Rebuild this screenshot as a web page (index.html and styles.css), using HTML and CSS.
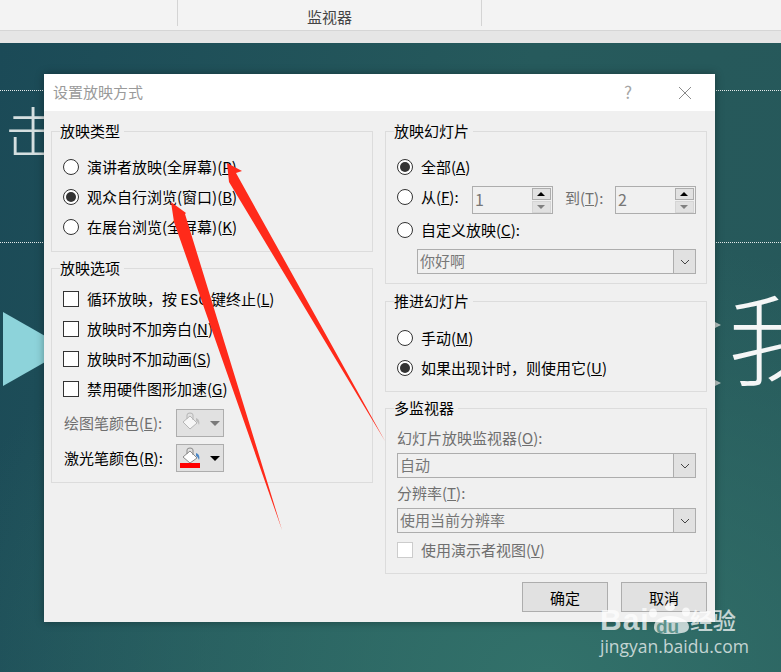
FILE: index.html
```html
<!DOCTYPE html>
<html lang="zh-CN">
<head>
<meta charset="utf-8">
<title>设置放映方式</title>
<link rel="stylesheet" href="styles.css">
</head>
<body>
<div class="page">
  <header class="ribbon">
    <div class="ribbon-cell first"></div>
    <div class="ribbon-cell middle">监视器</div>
    <div class="ribbon-cell"></div>
  </header>
  <div class="strip"></div>
  <main class="slide">
    <div class="dotted top"></div>
    <div class="dotted bottom"></div>
    <div class="big-glyph left">击</div>
    <div class="big-glyph right">我</div>
    <div class="stub one"></div>
    <div class="stub two"></div>
    <div class="play"></div>
    <section class="dialog">
      <div class="titlebar">
        <span class="title">设置放映方式</span>
        <span class="help">?</span>
        <svg class="close" width="14" height="14" viewBox="0 0 14 14"><path d="M1 1L13 13M13 1L1 13" stroke="#8a8a8a" fill="none"/></svg>
      </div>
      <div class="dialog-body">
        <div class="columns">
          <div class="column left-col">
            <fieldset class="group type-group">
              <legend>放映类型</legend>
              <div class="row"><span class="radio"></span>演讲者放映(全屏幕)(<u>P</u>)</div>
              <div class="row"><span class="radio on"></span>观众自行浏览(窗口)(<u>B</u>)</div>
              <div class="row"><span class="radio"></span>在展台浏览(全屏幕)(<u>K</u>)</div>
            </fieldset>
            <fieldset class="group options-group">
              <legend>放映选项</legend>
              <div class="row"><span class="check"></span>循环放映，按 ESC 键终止(<u>L</u>)</div>
              <div class="row"><span class="check"></span>放映时不加旁白(<u>N</u>)</div>
              <div class="row"><span class="check"></span>放映时不加动画(<u>S</u>)</div>
              <div class="row"><span class="check"></span>禁用硬件图形加速(<u>G</u>)</div>
              <div class="color-row muted">
                <span class="color-label">绘图笔颜色(<u>E</u>):</span>
                <span class="color-btn">
                  <svg width="24" height="22" viewBox="0 0 24 22"><path d="M10 4l7 7-7 6-7-7z" fill="#f6f6f6" stroke="#b5b5b5"/><path d="M7 7V3q0-2 3-2t3 2v5" fill="none" stroke="#b5b5b5"/><path d="M16 6c3 1 4 4 3 7-1-2-1-3-3-4z" fill="#bdbdbd"/></svg>
                  <span class="caret"></span>
                </span>
              </div>
              <div class="color-row">
                <span class="color-label">激光笔颜色(<u>R</u>):</span>
                <span class="color-btn">
                  <svg width="24" height="22" viewBox="0 0 24 22"><path d="M10 4l7 7-7 5-7-6z" fill="#fff" stroke="#8a8a8a"/><path d="M7 7V3q0-2 3-2t3 2v5" fill="none" stroke="#8a8a8a"/><path d="M16 6c3 1 4 4 3 7-1-2-1-3-3-4z" fill="#4a86c5"/><rect x="0" y="16" width="20" height="5" fill="#f00"/></svg>
                  <span class="caret"></span>
                </span>
              </div>
            </fieldset>
          </div>
          <div class="column">
            <fieldset class="group slides-group">
              <legend>放映幻灯片</legend>
              <div class="row"><span class="radio on"></span>全部(<u>A</u>)</div>
              <div class="row range-row">
                <span class="radio"></span><span class="from-label">从(<u>F</u>):</span>
                <span class="spin"><span class="spin-value">1</span><span class="spin-btns"><span class="spin-up"></span><span class="spin-down"></span></span></span>
                <span class="to-label muted">到(<u>T</u>):</span>
                <span class="spin"><span class="spin-value">2</span><span class="spin-btns"><span class="spin-up"></span><span class="spin-down"></span></span></span>
              </div>
              <div class="row custom-row"><span class="radio"></span>自定义放映(<u>C</u>):</div>
              <div class="select indent"><span class="select-value">你好啊</span><span class="select-btn"><svg width="10" height="6" viewBox="0 0 10 6"><path d="M1 1l4 4 4-4" fill="none" stroke="#444"/></svg></span></div>
            </fieldset>
            <fieldset class="group advance-group">
              <legend>推进幻灯片</legend>
              <div class="row"><span class="radio"></span>手动(<u>M</u>)</div>
              <div class="row"><span class="radio on"></span>如果出现计时，则使用它(<u>U</u>)</div>
            </fieldset>
            <fieldset class="group monitor-group">
              <legend>多监视器</legend>
              <div class="field-label muted">幻灯片放映监视器(<u>O</u>):</div>
              <div class="select"><span class="select-value">自动</span><span class="select-btn"><svg width="10" height="6" viewBox="0 0 10 6"><path d="M1 1l4 4 4-4" fill="none" stroke="#444"/></svg></span></div>
              <div class="field-label muted">分辨率(<u>T</u>):</div>
              <div class="select"><span class="select-value">使用当前分辨率</span><span class="select-btn"><svg width="10" height="6" viewBox="0 0 10 6"><path d="M1 1l4 4 4-4" fill="none" stroke="#444"/></svg></span></div>
              <div class="presenter muted"><span class="check disabled"></span>使用演示者视图(<u>V</u>)</div>
            </fieldset>
          </div>
        </div>
        <div class="actions">
          <button class="btn" type="button">确定</button>
          <button class="btn" type="button">取消</button>
        </div>
      </div>
    </section>
  </main>
  <svg class="arrows" width="781" height="672" viewBox="0 0 781 672">
    <polygon points="227,163 242,171 236,173 385,441 229,182" fill="#ff2a1a"/>
    <polygon points="171,202 186,213 185,214 282,530 174,222" fill="#ff2a1a"/>
  </svg>
  <div class="watermark">
    <div class="wm-top">
      <span class="wm-bai">Bai</span>
      <svg class="wm-paw" width="54" height="34" viewBox="0 0 54 34"><g fill="#fff" fill-opacity=".72"><ellipse cx="11" cy="10" rx="4" ry="4.5"/><ellipse cx="28" cy="4" rx="5" ry="4"/><ellipse cx="44" cy="9" rx="4" ry="4.5"/><path d="M12 24c0-7 7-11 16-11s19 4 19 11c0 5-6 7-19 7S12 29 12 24z"/></g></svg>
      <span class="wm-du">du</span>
      <span class="wm-jy">经验</span>
    </div>
    <div class="wm-url">jingyan.baidu.com</div>
  </div>
</div>
</body>
</html>
```
FILE: styles.css
```css
* { box-sizing: border-box; }
html, body { margin: 0; padding: 0; }
body { font-family: "Noto Sans CJK SC", "Liberation Sans", sans-serif; font-size: 15px; color: #000; }
.page { position: relative; width: 781px; height: 672px; overflow: hidden; display: flex; flex-direction: column; }

.ribbon { height: 31px; flex: none; display: flex; background: #f3f3f3; border-bottom: 1px solid #d6d6d6; }
.ribbon-cell { flex: 1; height: 26px; }
.ribbon-cell.first { flex: 0 0 178px; border-right: 1px solid #d4d4d4; }
.ribbon-cell.middle { flex: 0 0 304px; border-right: 1px solid #d4d4d4; text-align: center; line-height: 34px; color: #444; }
.strip { height: 12px; flex: none; background: #e6e6e6; }

.slide { position: relative; flex: 1; overflow: hidden; background: radial-gradient(ellipse 640px 440px at 70% 100%, #32716a 0%, rgba(50,113,106,0) 100%), linear-gradient(100deg, #1b4a57 0%, #265a5c 60%, #26585a 100%); }
.dotted { position: absolute; left: 0; right: 0; border-top: 1px dotted #e4eaea; }
.dotted.top { top: 47px; }
.dotted.bottom { top: 199px; }
.big-glyph { position: absolute; color: #f4f6f6; font-weight: 300; line-height: 1; }
.big-glyph.left { font-size: 56px; left: 5px; top: 59px; color: #d5dfe0; }
.big-glyph.right { font-size: 100px; left: 728px; top: 242px; }
.stub { position: absolute; left: 715px; width: 0; height: 0; border-top: 3px solid transparent; border-bottom: 3px solid transparent; border-left: 6px solid #b9c6c4; }
.stub.one { top: 279px; }
.stub.two { top: 337px; }
.play { position: absolute; left: 3px; top: 269px; width: 0; height: 0; border-top: 37px solid transparent; border-bottom: 37px solid transparent; border-left: 65px solid #8dd3da; }

.dialog { position: absolute; left: 44px; top: 31px; width: 671px; height: 548px; background: #f0f0f0; box-shadow: 0 0 8px rgba(0,0,0,.35); display: flex; flex-direction: column; }
.titlebar { height: 37px; flex: none; background: #fff; display: flex; align-items: center; padding-left: 9px; padding-right: 23px; }
.title { flex: 1; color: #9a9a9a; padding-bottom: 2px; }
.help { color: #a5a5a5; width: 54px; font-size: 17px; padding-bottom: 2px; }
.dialog-body { flex: 1; padding: 10px 8px 0 7px; }
.columns { display: grid; grid-template-columns: 322px 322px; column-gap: 12px; }
.column { display: flex; flex-direction: column; gap: 7px; }
.left-col { gap: 6px; }

.group { margin: 0; padding: 0 10px 0 11px; border: 1px solid #dcdcdc; min-width: 0; }
.group legend { margin-left: -3px; padding: 0 4px 0 0; line-height: 20px; height: 20px; font-size: 15px; }
.type-group { padding-top: 11px; padding-bottom: 9px; }
.options-group { padding-top: 6px; padding-bottom: 10px; }
.slides-group { padding-top: 11px; padding-bottom: 9px; }
.advance-group { padding-top: 12px; padding-bottom: 8px; }
.monitor-group { margin-top: -1px; padding-top: 10px; padding-bottom: 11px; }

.row { height: 30px; padding-bottom: 2px; display: flex; align-items: center; white-space: nowrap; }
.radio { flex: none; width: 16px; height: 16px; margin: 2px 8px 0 0; border: 1px solid #333; border-radius: 50%; background: #fff; position: relative; }
.radio.on::after { content: ""; position: absolute; left: 2px; top: 2px; width: 10px; height: 10px; border-radius: 50%; background: #333; }
.check { flex: none; width: 16px; height: 16px; margin: 2px 8px 0 0; border: 1px solid #333; background: #fff; }
.check.disabled { border-color: #ccc; }
.muted, .muted u { color: #6f6f6f; }

.color-row { display: flex; align-items: center; height: 28px; margin-top: 7px; }
.options-group .row + .color-row { margin-top: 5px; }
.color-label { flex: 0 0 113px; padding: 0 0 2px 1px; white-space: nowrap; }
.color-btn { width: 48px; height: 28px; border: 1px solid #adadad; background: #e1e1e1; display: flex; align-items: center; padding-left: 3px; }
.caret { margin-left: 6px; width: 0; height: 0; border-left: 5px solid transparent; border-right: 5px solid transparent; border-top: 5px solid #000; }
.muted .caret { border-top-color: #7a7a7a; }

.range-row .from-label { flex: 0 0 51px; }
.range-row .to-label { padding-top: 2px; }
.range-row .from-label { padding-top: 1px; }
.spin { flex: none; width: 81px; height: 28px; margin-top: 8px; border: 1px solid #adadad; display: flex; align-items: center; justify-content: space-between; padding: 1px; }
.spin-value { color: #777; padding: 0 0 2px 1px; font-size: 16px; }
.spin-btns { width: 19px; display: flex; flex-direction: column; gap: 1px; }
.spin-up, .spin-down { height: 12px; background: #e1e1e1; border: 1px solid #adadad; position: relative; }
.spin-down { border-color: #d5d5d5; }
.spin-up::after, .spin-down::after { content: ""; position: absolute; left: 4px; top: 3px; width: 0; height: 0; border-left: 4px solid transparent; border-right: 4px solid transparent; }
.spin-up::after { border-bottom: 4px solid #000; }
.spin-down::after { border-top: 4px solid #808080; }
.to-label { flex: 0 0 50px; margin-left: 12px; }
.custom-row { margin-top: 3px; }
.select { height: 25px; border: 1px solid #adadad; display: flex; align-items: center; justify-content: space-between; }
.select.indent { margin-left: 20px; margin-top: 4px; }
.select-value { color: #777; padding: 0 0 2px 2px; line-height: 21px; }
.select-btn { width: 22px; height: 23px; background: #e1e1e1; border-left: 1px solid #adadad; display: flex; align-items: center; justify-content: center; }
.field-label { height: 22px; line-height: 20px; margin-bottom: 3px; }
.monitor-group .select { margin-bottom: 5px; }
.presenter { display: flex; align-items: center; height: 24px; padding-bottom: 2px; }

.actions { display: flex; justify-content: flex-end; gap: 13px; margin-top: 8px; }
.btn { width: 86px; height: 30px; margin: 0; padding: 0; border: 1px solid #adadad; background: #e1e1e1; font: inherit; color: #000; }

.arrows { position: absolute; left: 0; top: 0; }
.watermark { position: absolute; left: 600px; top: 603px; color: rgba(255,255,255,.72); }
.wm-top { display: flex; align-items: flex-end; height: 32px; line-height: 1; }
.wm-bai { font-family: "Liberation Sans", sans-serif; font-weight: 700; font-size: 30px; letter-spacing: 1px; width: 52px; }
.wm-paw { position: absolute; left: 42px; top: 0; }
.wm-du { position: absolute; left: 56px; top: 14px; font-family: "Liberation Sans", sans-serif; font-weight: 700; font-size: 19px; color: #5d938c; }
.wm-jy { position: absolute; left: 90px; top: 5px; font-size: 23px; font-weight: 500; white-space: nowrap; }
.wm-url { font-family: "Open Sans", "Liberation Sans", sans-serif; font-size: 17.5px; line-height: 20px; margin-top: 1px; white-space: nowrap; }
```
